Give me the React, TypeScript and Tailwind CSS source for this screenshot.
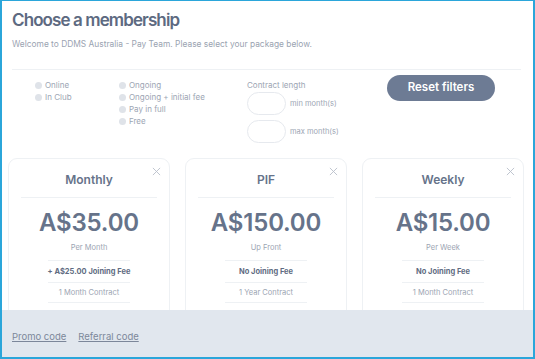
import React from 'react';

const plans = [
  { name: 'Monthly', price: 'A$35.00', period: 'Per Month', fee: '+ A$25.00 Joining Fee', term: '1 Month Contract' },
  { name: 'PIF', price: 'A$150.00', period: 'Up Front', fee: 'No Joining Fee', term: '1 Year Contract' },
  { name: 'Weekly', price: 'A$15.00', period: 'Per Week', fee: 'No Joining Fee', term: '1 Month Contract' },
];

const Radio = ({ label }: { label: string }) => (
  <label className="flex items-center gap-[3px] h-[12px] text-[8px] text-[#9ca5b3]">
    <span className="w-[7px] h-[7px] rounded-full bg-[#dfe3e9]" />
    {label}
  </label>
);

const PlanCard = ({ plan }: { plan: (typeof plans)[number] }) => (
  <div className="relative w-[162px] shrink-0 rounded-[9px] border border-[#eef1f4] bg-white px-[12px] pt-[9px] pb-4">
    <button className="absolute right-[8px] top-[8px] text-[#b9c0cb]" aria-label="Remove">
      <svg width="9" height="9" viewBox="0 0 10 10" fill="none" stroke="currentColor" strokeWidth={1}>
        <path d="M1 1l8 8M9 1l-8 8" />
      </svg>
    </button>
    <div className="h-[24px] flex items-center justify-center text-[12px] font-semibold text-[#66738a]">{plan.name}</div>
    <div className="mt-[5px] border-t border-[#eef1f4]" />
    <div className="mt-[10px] h-[30px] flex items-center justify-center text-[24px] font-semibold tracking-[-0.2px] text-[#66738a]">
      {plan.price}
    </div>
    <div className="mt-[4px] h-[12px] flex items-center justify-center text-[7.5px] text-[#9ca5b3]">{plan.period}</div>
    <div className="mx-auto mt-[6px] w-[82px] border-t border-[#eef1f4]" />
    <div className="h-[21px] flex items-center justify-center text-[7.5px] font-bold text-[#5f6c82]">{plan.fee}</div>
    <div className="mx-auto w-[82px] border-t border-[#eef1f4]" />
    <div className="h-[19px] flex items-center justify-center text-[7.5px] text-[#9ca5b3]">{plan.term}</div>
    <div className="mx-auto w-[82px] border-t border-[#eef1f4]" />
    <div className="h-[20px]" />
  </div>
);

export default function App() {
  return (
    <div
      className="w-[535px] h-[359px] flex flex-col overflow-hidden bg-white border-x-2 border-b-2 border-t border-[#2ba6da]"
      style={{ fontFamily: 'Inter, "Open Sans", sans-serif' }}
    >
      <div className="flex-1 overflow-hidden">
        <div className="px-[10px]">
          <h1 className="mt-[6px] h-[26px] leading-[26px] text-[17px] font-semibold tracking-[-0.9px] text-[#5d6a81]">
            Choose a membership
          </h1>
          <p className="mt-[5px] text-[8.4px] leading-[12px] text-[#9aa3b1]">
            Welcome to DDMS Australia - Pay Team. Please select your package below.
          </p>
          <div className="mt-[19px] mr-[2px] border-t border-[#eef1f4]" />
        </div>

        {/* Filters */}
        <div className="flex items-start pt-[9px]">
          <div className="ml-[33px] w-[84px] flex flex-col">
            <Radio label="Online" />
            <Radio label="In Club" />
          </div>
          <div className="w-[128px] flex flex-col">
            <Radio label="Ongoing" />
            <Radio label="Ongoing + initial fee" />
            <Radio label="Pay in full" />
            <Radio label="Free" />
          </div>
          <div className="w-[140px] flex flex-col">
            <div className="h-[12px] flex items-center text-[8px] text-[#9ca5b3]">Contract length</div>
            <div className="mt-[1px] flex items-center gap-[4px]">
              <div className="w-[39px] h-[23px] rounded-full border border-[#e6e9ee]" />
              <span className="text-[7.5px] text-[#9ca5b3]">min month(s)</span>
            </div>
            <div className="mt-[5px] flex items-center gap-[4px]">
              <div className="w-[39px] h-[23px] rounded-full border border-[#e6e9ee]" />
              <span className="text-[7.5px] text-[#9ca5b3]">max month(s)</span>
            </div>
          </div>
          <button className="mt-[-4px] w-[108px] h-[26px] rounded-full bg-[#6d7b94] text-white text-[11.5px] font-semibold">
            Reset filters
          </button>
        </div>

        {/* Plans */}
        <div className="mt-[15px] pl-[6px] flex gap-[15px]">
          {plans.map((p) => (
            <PlanCard key={p.name} plan={p} />
          ))}
        </div>
      </div>

      <div className="h-[47px] shrink-0 bg-[#e1e7ee] flex items-center gap-[12px] px-[10px] pt-[8px]">
        <a href="#" className="text-[9.5px] text-[#7c879a] underline">Promo code</a>
        <a href="#" className="text-[9.5px] text-[#7c879a] underline">Referral code</a>
      </div>
    </div>
  );
}
